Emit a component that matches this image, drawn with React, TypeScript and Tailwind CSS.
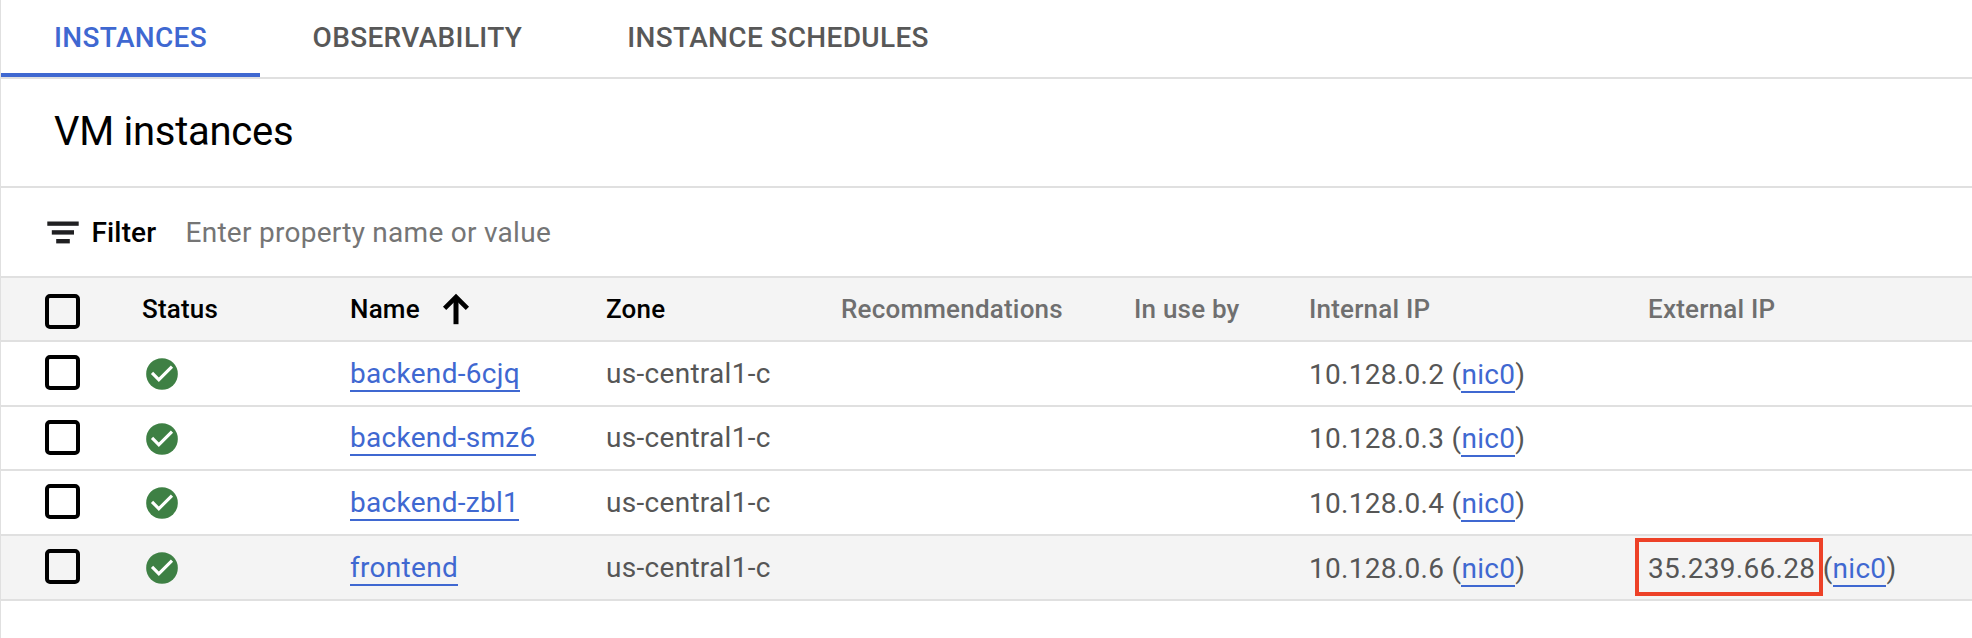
import type { ReactNode } from "react";

type Instance = {
  name: string;
  zone: string;
  internalIp: string;
  externalIp?: string;
  row: string;
  text: string;
  ipText: string;
};

const instances: Instance[] = [
  { name: "backend-6cjq", zone: "us-central1-c", internalIp: "10.128.0.2", row: "h-[65px]", text: "leading-[63px]", ipText: "leading-[65px]" },
  { name: "backend-smz6", zone: "us-central1-c", internalIp: "10.128.0.3", row: "h-[64px]", text: "leading-[61px]", ipText: "leading-[63px]" },
  { name: "backend-zbl1", zone: "us-central1-c", internalIp: "10.128.0.4", row: "h-[65px]", text: "leading-[63px]", ipText: "leading-[65px]" },
  {
    name: "frontend",
    zone: "us-central1-c",
    internalIp: "10.128.0.6",
    externalIp: "35.239.66.28",
    row: "h-[65px] bg-[#f4f4f4]",
    text: "leading-[63px]",
    ipText: "leading-[65px]",
  },
];

const columns = "grid grid-cols-[141px_208px_256px_235px_293px_175px_339px_1fr] border-b-2 border-[#e0e0e0]";

function Checkbox({ label, offset }: { label: string; offset: string }) {
  return (
    <div className={`pl-11 ${offset}`}>
      <div role="checkbox" aria-checked="false" aria-label={label} className="size-[35px] rounded-[5px] border-4 border-black" />
    </div>
  );
}

function Link({ children }: { children: ReactNode }) {
  return <a className="border-b-2 border-[#3f68d1] text-[#3f68d1]">{children}</a>;
}

function FilterIcon() {
  return (
    <svg width="32" height="23" viewBox="0 0 32 23" fill="#202022">
      <rect x="0.3" y="0.5" width="31.4" height="4.3" />
      <rect x="4.8" y="9.2" width="22.2" height="4.4" />
      <rect x="9.2" y="18" width="13.6" height="4.4" />
    </svg>
  );
}

function SortArrow() {
  return (
    <svg width="28" height="32" viewBox="0 0 28 32" fill="none" stroke="#000" className="ml-[22px] mt-[15px] shrink-0">
      <path d="M14 31.2V5" strokeWidth="5" />
      <path d="M2.6 15.4 14 4l11.4 11.4" strokeWidth="4.6" />
    </svg>
  );
}

function StatusOk() {
  return (
    <svg width="38" height="38" viewBox="0 0 24 24" className="ml-[1px] mt-[13px]">
      <circle cx="12" cy="12" r="10" fill="#3e8044" />
      <path d="M10 17l-5-5 1.41-1.41L10 14.17l7.59-7.59L19 8z" fill="#fff" />
    </svg>
  );
}

export default function App() {
  return (
    <div className="h-[638px] w-full overflow-hidden whitespace-nowrap border-l border-[#e0e0e0] bg-white font-[Roboto,sans-serif] text-[28px] tracking-[0.3px] text-[#565656]">
      <nav className="flex h-[79px] border-b-2 border-[#e0e0e0] font-medium leading-[75px] tracking-[0.34px] text-[#585858]">
        <div className="relative w-[259px] pl-[53px] text-[#3f68d1]">
          INSTANCES
          <div className="absolute inset-x-0 bottom-0 h-1 bg-[#3f68d1]" />
        </div>
        <div className="px-[52.5px]">OBSERVABILITY</div>
        <div className="px-[52.5px]">INSTANCE SCHEDULES</div>
      </nav>

      <h1 className="h-[109px] border-b-2 border-[#e0e0e0] pl-[53px] text-[40px] leading-[105px] tracking-[-0.27px] text-black">
        VM instances
      </h1>

      <div className="flex h-[90px] border-b-2 border-[#e0e0e0] pl-[46px] pt-px leading-[87px]">
        <div className="pt-8">
          <FilterIcon />
        </div>
        <span className="w-[93.5px] pl-[12.5px] font-medium tracking-[0.15px] text-black">Filter</span>
        <span className="pl-[13px] tracking-[0.27px] text-[#757575]">Enter property name or value</span>
      </div>

      <div className={`${columns} h-16 bg-[#f4f4f4] text-[26px] font-medium leading-[62px] tracking-[0.2px] text-[#6f6f6f]`}>
        <Checkbox label="Select all" offset="pt-4" />
        <div className="text-black">Status</div>
        <div className="flex text-black">
          Name
          <SortArrow />
        </div>
        <div className="text-black">Zone</div>
        <div>Recommendations</div>
        <div>In use by</div>
        <div>Internal IP</div>
        <div>External IP</div>
      </div>

      {instances.map((vm) => (
        <div key={vm.name} className={`${columns} ${vm.row}`}>
          <Checkbox label={vm.name} offset="pt-[13px]" />
          <StatusOk />
          <div className={vm.text}>
            <Link>{vm.name}</Link>
          </div>
          <div className={vm.text}>{vm.zone}</div>
          <div />
          <div />
          <div className={vm.ipText}>
            {vm.internalIp} (<Link>nic0</Link>)
          </div>
          <div className={`relative ${vm.ipText}`}>
            {vm.externalIp && (
              <>
                {vm.externalIp} (<Link>nic0</Link>)
                <div className="absolute -left-[13px] top-0.5 h-[58px] w-[188px] border-4 border-[#ed4127]" />
              </>
            )}
          </div>
        </div>
      ))}
    </div>
  );
}
